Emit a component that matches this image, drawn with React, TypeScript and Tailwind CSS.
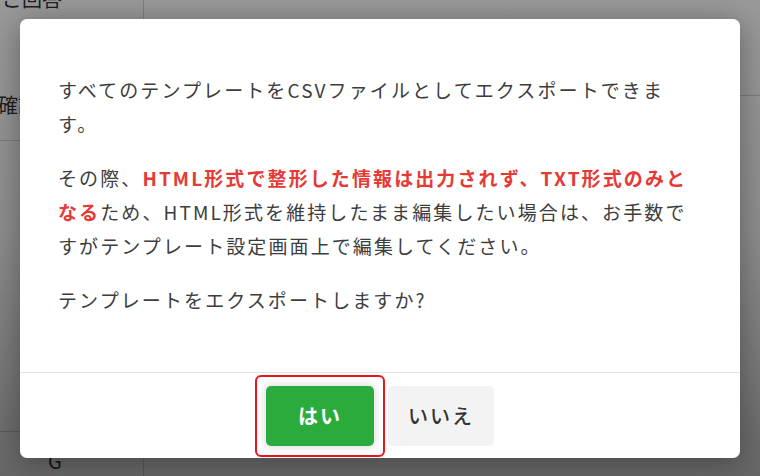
import { useState } from 'react';

const FONT = "font-['Noto_Sans_CJK_JP','Noto_Sans',sans-serif]";

// 背景のページ（モーダルの後ろに見える部分）
function BackgroundPage() {
  return (
    <div className={`h-[476px] w-[760px] overflow-hidden bg-white text-[#333] ${FONT}`}>
      <div className="flex h-full">
        <div className="flex w-[144px] shrink-0 flex-col border-r border-gray-300">
          <div className="-mt-[14px] h-[159px] border-b border-gray-300 pl-[2px] text-[20px] leading-[26px]">
            <p>ご回答</p>
            <p className="mt-[80px] -ml-[4px]">確認</p>
          </div>
          <div className="h-[300px] border-b border-gray-300" />
          <div className="pl-[48px] pt-[14px] text-[20px]">G</div>
        </div>
        <div className="flex-1">
          <div className="h-[96px] border-b border-gray-300" />
        </div>
      </div>
    </div>
  );
}

export default function App() {
  const [open, setOpen] = useState(true);

  return (
    <div className="relative h-[476px] w-[760px] overflow-hidden">
      <BackgroundPage />

      {open && (
        <div className="absolute inset-0 flex items-center justify-center bg-gradient-to-b from-black/40 via-black/45 to-black/60">
          <div className={`flex w-[720px] flex-col rounded-[7px] bg-white shadow-[0_4px_30px_rgba(0,0,0,0.35)] ${FONT}`}>
            {/* 本文 */}
            <div className="px-[38px] pb-[55px] pt-[54px] text-[19px] leading-[34px] tracking-[2.1px] text-[#3d3d3d]">
              <p>すべてのテンプレートをCSVファイルとしてエクスポートできます。</p>
              <p className="mt-[20px]">
                その際、
                <span className="font-bold text-[#e53a35]">HTML形式で整形した情報は出力されず、TXT形式のみとなる</span>
                ため、HTML形式を維持したまま編集したい場合は、お手数ですがテンプレート設定画面上で編集してください。
              </p>
              <p className="mt-[20px]">テンプレートをエクスポートしますか?</p>
            </div>

            {/* フッター */}
            <div className="flex justify-center gap-[14px] border-t border-[#e2e2e2] pb-[12px] pt-[13px]">
              <button
                onClick={() => setOpen(false)}
                className="relative h-[60px] w-[108px] rounded-[5px] bg-[#2bab3b] text-[20px] font-bold tracking-[2px] text-white shadow-[0_0_8px_2px_rgba(0,0,0,0.12)]"
              >
                はい
                <span className="pointer-events-none absolute -inset-[11px] rounded-[6px] border-2 border-[#e8141c]" />
              </button>
              <button
                onClick={() => setOpen(false)}
                className="h-[60px] w-[106px] rounded-[5px] bg-[#f3f3f3] text-[20px] font-medium tracking-[2px] text-[#333]"
              >
                いいえ
              </button>
            </div>
          </div>
        </div>
      )}
    </div>
  );
}
